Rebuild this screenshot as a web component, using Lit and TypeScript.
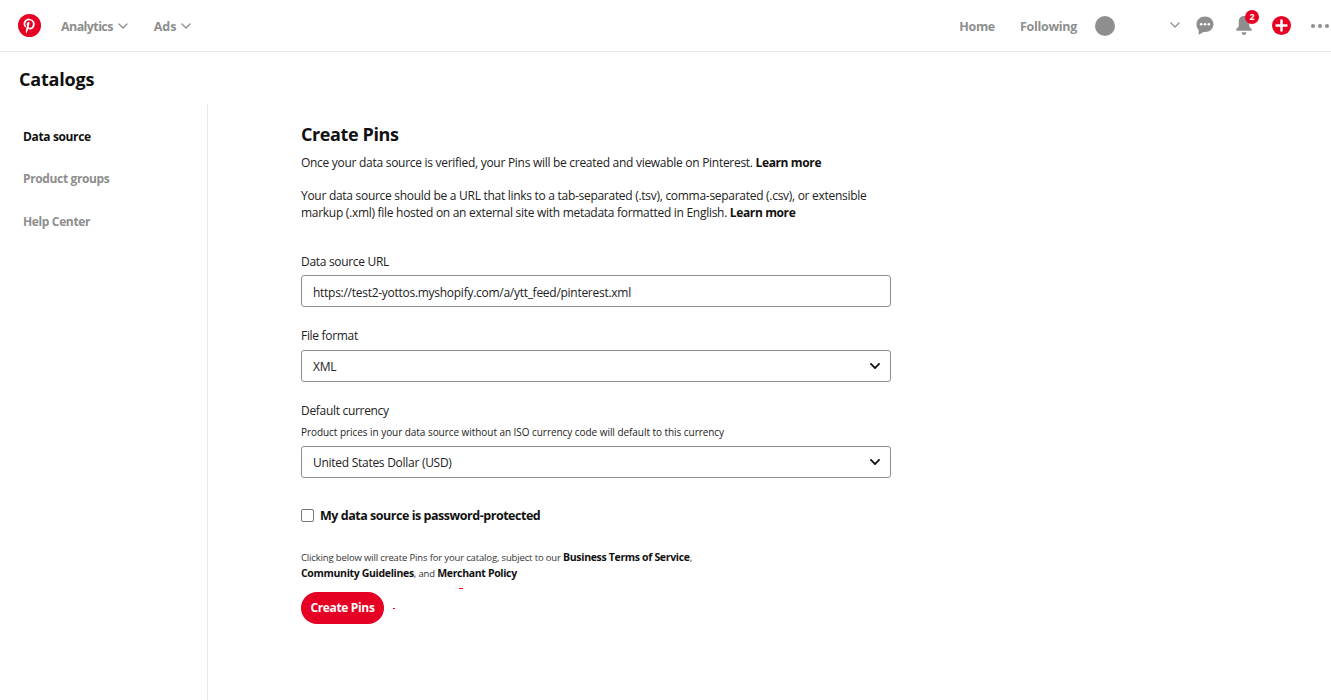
import { LitElement, html, css } from "lit";
import { customElement } from "lit/decorators.js";

const chevron = (cls: string, w = 1.6) => html`<svg class=${cls} viewBox="0 0 12 8"><path d="M1 1.2 6 6.2 11 1.2" fill="none" stroke="currentColor" stroke-width=${w} stroke-linecap="round" stroke-linejoin="round"/></svg>`;

@customElement("app-root")
export class AppRoot extends LitElement {
  static styles = css`
    :host { display: block; height: 700px; overflow: hidden; background: #fff; color: #111; font-family: "Open Sans", "Noto Sans", sans-serif; font-size: 12px; }
    * { box-sizing: border-box; }
    a { color: inherit; text-decoration: none; }
    b { font-weight: 700; }
    .top { height: 52px; border-bottom: 1px solid #e9e9e9; display: flex; align-items: center; padding: 0 2px 0 18px; color: #8e8e8e; font-weight: 700; font-size: 12.5px; letter-spacing: -0.3px; }
    .logo { width: 23px; height: 23px; display: block; margin-right: 20px; }
    .nav { display: flex; align-items: center; gap: 5px; margin-right: 26px; letter-spacing: -0.6px; padding-top: 2px; }
    .nav.ads { letter-spacing: -0.1px; gap: 5px; }
    .chev { width: 10px; height: 6.5px; display: block; }
    .spacer { flex: 1; }
    .home { margin-right: 25px; padding-top: 2px; }
    .following { padding-top: 2px; }
    .avatar { width: 20px; height: 20px; border-radius: 50%; background: #8e8e8e; margin-left: 18px; margin-right: 55px; }
    .ico { display: block; }
    .chat { width: 18px; height: 19px; margin-left: 16px; }
    .bellwrap { position: relative; width: 18px; height: 19px; margin-left: 21px; }
    .bell { width: 18px; height: 19px; }
    .badge { position: absolute; left: 10px; top: -6px; width: 14px; height: 14px; border-radius: 50%; background: #e60023; color: #fff; font-size: 9px; line-height: 14px; text-align: center; letter-spacing: 0; }
    .plus { width: 19px; height: 19px; margin-left: 19px; }
    .dots { width: 18px; height: 4px; margin-left: 20px; }
    h1 { margin: 0; height: 52px; padding: 15px 0 0 19px; font-size: 18px; line-height: 24px; font-weight: 700; letter-spacing: -0.2px; color: #111; }
    .main { display: flex; height: 596px; }
    .side { width: 208px; border-right: 1px solid #e9e9e9; padding: 24px 0 0 23px; display: flex; flex-direction: column; gap: 25px; font-weight: 700; font-size: 12px; letter-spacing: -0.36px; color: #8e8e8e; line-height: 17px; }
    .side .on { color: #111; }
    .side .last { margin-top: 1px; }
    .content { width: 590px; margin-left: 93px; padding-top: 18px; }
    h2 { margin: 0; font-size: 18px; line-height: 24px; font-weight: 700; letter-spacing: -0.4px; }
    p { margin: 0; line-height: 17px; letter-spacing: -0.285px; color: #222; }
    p b { color: #111; letter-spacing: -0.38px; }
    .p1 { margin-top: 8px; }
    .p2 { margin-top: 16px; }
    .lab { display: block; line-height: 17px; letter-spacing: -0.31px; color: #222; }
    .l1 { margin-top: 32px; }
    .box { margin-top: 5px; height: 32px; border: 1px solid #8e8e8e; border-radius: 3px; padding: 0 10px 0 11px; display: flex; align-items: center; justify-content: space-between; line-height: 17px; letter-spacing: -0.275px; color: #222; }
    .urlbox { padding-top: 2px; }
    .sel { width: 10px; height: 6.5px; color: #111; display: block; }
    .l2 { margin-top: 20px; }
    .selbox { margin-top: 6px; }
    .l3 { margin-top: 20px; }
    .hint { font-size: 10px; line-height: 14px; margin-top: 6px; letter-spacing: -0.05px; color: #222; }
    .hintbox { margin-top: 7px; }
    .check { display: flex; align-items: center; margin-top: 29px; font-weight: 700; font-size: 12.5px; letter-spacing: -0.47px; line-height: 18px; color: #111; }
    .cb { width: 13px; height: 13px; border: 1px solid #767676; border-radius: 2px; margin-right: 6px; background: #fff; position: relative; top: -1px; }
    .terms { margin-top: 25px; font-size: 9.5px; line-height: 15.5px; letter-spacing: -0.15px; color: #333; }
    .terms b { font-size: 10.5px; letter-spacing: -0.33px; color: #111; }
    .btn { display: inline-block; margin-top: 11px; height: 32px; width: 83px; border: 0; border-radius: 16px; background: #e60023; color: #fff; font: inherit; font-weight: 700; letter-spacing: -0.35px; padding: 0; text-align: center; line-height: 32px; }
    .specks { position: relative; height: 0; }
    .speck { position: absolute; background: #ff0000; height: 1px; }
    .s1 { left: 158px; top: -36px; width: 4px; }
    .s2 { left: 92px; top: -16px; width: 2px; }
  `;

  render() {
    return html`
      <header class="top">
        <svg class="logo" viewBox="0 0 24 24"><circle cx="12" cy="12" r="12" fill="#e60023"/><path fill="#fff" d="M12.1 4.6c-4.1 0-6.3 2.7-6.3 5.700 0 1.400.8 3.100 2 3.700.2.1.3 0 .3-.1l.3-1.100c0-.1 0-.2-.1-.3-.4-.5-.7-1.300-.7-2.100 0-2 1.500-3.900 4.100-3.900 2.200 0 3.800 1.500 3.800 3.700 0 2.500-1.200 4.200-2.900 4.200-.9 0-1.600-.8-1.400-1.700.3-1.100.8-2.300.8-3.100 0-.7-.4-1.300-1.200-1.300-.9 0-1.700 1-1.700 2.300 0 .8.300 1.400.3 1.400l-1.100 4.600c-.2 1-.1 2.600 0 3.500 0 .1.100.1.200.1.400-.6 1.200-1.800 1.500-2.800l.6-2.200c.3.600 1.200 1.100 2.100 1.100 2.800 0 4.800-2.600 4.800-5.800 0-3.100-2.500-5.400-5.900-5.400z"/></svg>
        <span class="nav">Analytics ${chevron("chev")}</span>
        <span class="nav ads">Ads ${chevron("chev")}</span>
        <span class="spacer"></span>
        <span class="home">Home</span>
        <span class="following">Following</span>
        <span class="avatar"></span>
        ${chevron("chev")}
        <svg class="ico chat" viewBox="0 0 20 21"><path fill="#8e8e8e" d="M10 .5c5.300 0 9.500 3.800 9.500 8.600s-4.200 8.600-9.500 8.600c-.6 0-1.100 0-1.700-.1L3.800 20.500c-.4.200-.8 0-.8-.5v-4.400C1.500 14 .5 11.700.5 9.100.5 4.300 4.700.5 10 .5z"/><circle cx="5.800" cy="9.100" r="1.400" fill="#fff"/><circle cx="10" cy="9.100" r="1.400" fill="#fff"/><circle cx="14.200" cy="9.100" r="1.400" fill="#fff"/></svg>
        <span class="bellwrap">
          <svg class="ico bell" viewBox="0 0 18 20"><path fill="#8e8e8e" d="M9 0c3.300 0 5.500 2.600 5.500 5.800v4.400c0 1.300 1.100 2.200 2.300 3.100.9.700.4 2.200-.8 2.200H2c-1.200 0-1.700-1.500-.8-2.200 1.200-.9 2.300-1.800 2.300-3.100V5.800C3.500 2.600 5.700 0 9 0z"/><path fill="#8e8e8e" d="M6.500 17h5c0 1.500-1.100 3-2.500 3s-2.500-1.500-2.500-3z"/></svg>
          <span class="badge">2</span>
        </span>
        <svg class="ico plus" viewBox="0 0 20 20"><circle cx="10" cy="10" r="10" fill="#e60023"/><path d="M10 4.800v10.400M4.800 10h10.400" stroke="#fff" stroke-width="2.600" stroke-linecap="round"/></svg>
        <svg class="ico dots" viewBox="0 0 18 4"><circle cx="2" cy="2" r="2" fill="#8e8e8e"/><circle cx="9" cy="2" r="2" fill="#8e8e8e"/><circle cx="16" cy="2" r="2" fill="#8e8e8e"/></svg>
      </header>
      <h1>Catalogs</h1>
      <div class="main">
        <nav class="side">
          <a class="on">Data source</a>
          <a>Product groups</a>
          <a class="last">Help Center</a>
        </nav>
        <section class="content">
          <h2>Create Pins</h2>
          <p class="p1">Once your data source is verified, your Pins will be created and viewable on Pinterest. <b>Learn more</b></p>
          <p class="p2">Your data source should be a URL that links to a tab-separated (.tsv), comma-separated (.csv), or extensible<br>markup (.xml) file hosted on an external site with metadata formatted in English. <b>Learn more</b></p>
          <label class="lab l1">Data source URL</label>
          <div class="box urlbox">https://test2-yottos.myshopify.com/a/ytt_feed/pinterest.xml</div>
          <label class="lab l2">File format</label>
          <div class="box selbox">XML ${chevron("sel", 2.2)}</div>
          <label class="lab l3">Default currency</label>
          <div class="hint">Product prices in your data source without an ISO currency code will default to this currency</div>
          <div class="box hintbox">United States Dollar (USD) ${chevron("sel", 2.2)}</div>
          <div class="check"><span class="cb"></span>My data source is password-protected</div>
          <p class="terms">Clicking below will create Pins for your catalog, subject to our <b>Business Terms of Service</b>,<br><b>Community Guidelines</b>, and <b>Merchant Policy</b></p>
          <button class="btn">Create Pins</button>
          <div class="specks"><span class="speck s1"></span><span class="speck s2"></span></div>
        </section>
      </div>
    `;
  }
}
